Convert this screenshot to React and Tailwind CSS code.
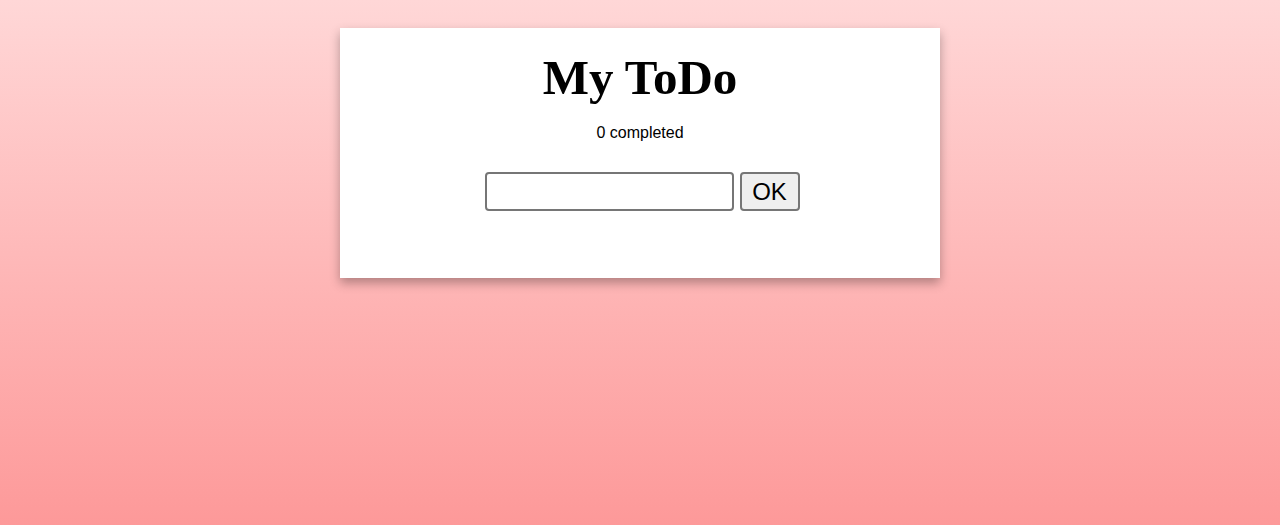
export default function App() {
  return (
    <div className="min-h-screen w-full bg-[linear-gradient(to_bottom,#ffd7d7,#fd9999)] pt-[28px]">
      <div className="mx-auto w-[600px] h-[250px] bg-white shadow-[0_5px_10px_rgba(0,0,0,0.3)] pt-[23px] text-center">
        <h1 className="m-0 text-[49px] leading-[54px] font-bold text-black font-['Liberation_Serif',serif]">
          My ToDo
        </h1>
        <p className="mt-[19px] text-[16px] leading-[18px] text-black font-['Liberation_Sans',Arial,sans-serif]">
          0 completed
        </p>
        <div className="mt-[30px] flex justify-center items-center gap-[6px] pl-[4px] font-['Liberation_Sans',Arial,sans-serif]">
          <input
            type="text"
            className="w-[249px] h-[39px] border-2 border-[#767676] rounded-[4px] bg-white px-[2px] text-[24px] outline-none"
          />
          <button className="w-[60px] h-[39px] border-2 border-[#767676] rounded-[4px] bg-[#efefef] text-[24px] text-black leading-none">
            OK
          </button>
        </div>
      </div>
    </div>
  );
}
